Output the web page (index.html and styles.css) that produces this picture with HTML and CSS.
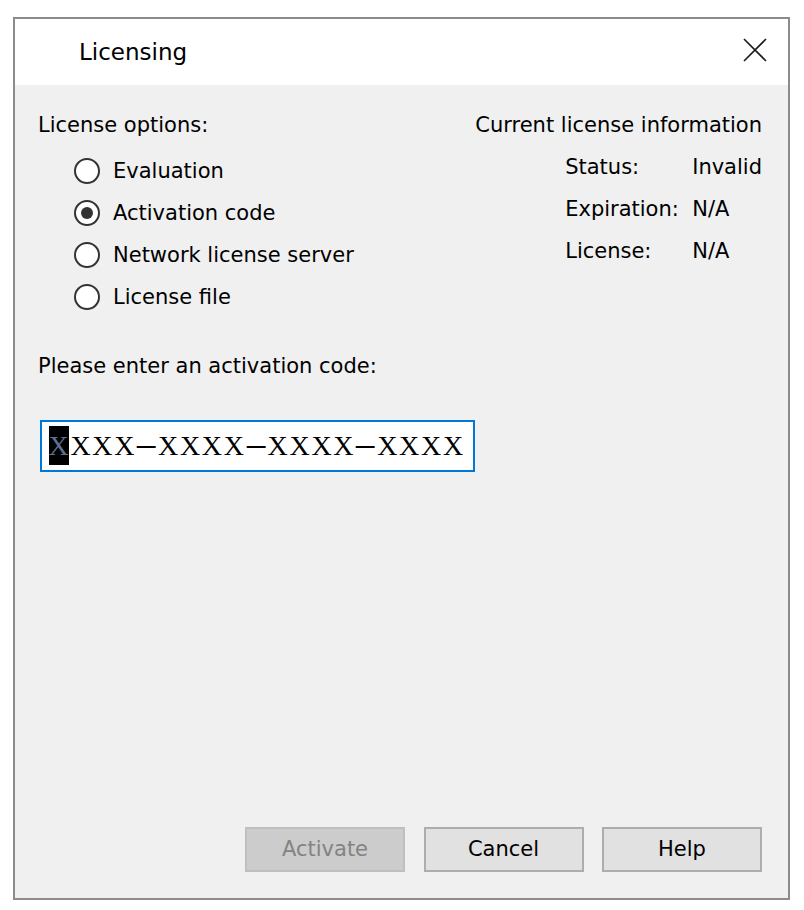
FILE: index.html
```html
<!DOCTYPE html>
<html lang="en">
<head>
<meta charset="utf-8">
<title>Licensing</title>
<link rel="stylesheet" href="styles.css">
</head>
<body>
<div class="page">
  <div class="window">
    <div class="titlebar">
      <span class="title">Licensing</span>
      <svg class="close" width="24" height="24" viewBox="0 0 24 24" aria-label="Close">
        <path d="M1 1L23 23M23 1L1 23" stroke="#1a1a1a" stroke-width="1.6" fill="none"/>
      </svg>
    </div>
    <div class="content">
      <div class="top">
        <div class="options">
          <div class="heading">License options:</div>
          <div class="radios">
            <div class="radio-row"><span class="radio"></span><span>Evaluation</span></div>
            <div class="radio-row"><span class="radio checked"></span><span>Activation code</span></div>
            <div class="radio-row"><span class="radio"></span><span>Network license server</span></div>
            <div class="radio-row"><span class="radio"></span><span>License file</span></div>
          </div>
        </div>
        <div class="info">
          <div class="heading">Current license information</div>
          <div class="info-grid">
            <span>Status:</span><span>Invalid</span>
            <span>Expiration:</span><span>N/A</span>
            <span>License:</span><span>N/A</span>
          </div>
        </div>
      </div>
      <div class="prompt">Please enter an activation code:</div>
      <div class="code-box">
        <span class="code"><span class="sel">X</span>XXX<span class="dash">-</span>XXXX<span class="dash">-</span>XXXX<span class="dash">-</span>XXXX</span>
      </div>
      <div class="buttons">
        <button class="btn" disabled>Activate</button>
        <button class="btn">Cancel</button>
        <button class="btn">Help</button>
      </div>
    </div>
  </div>
</div>
</body>
</html>
```

FILE: styles.css
```css
* {
  box-sizing: border-box;
}

body {
  margin: 0;
  background: #ffffff;
  font-family: "DejaVu Sans", Verdana, sans-serif;
  color: #000000;
}

.page {
  padding: 17px 14px 10px 13px;
}

.window {
  width: 777px;
  height: 883px;
  border: 2px solid #8c8c8c;
  background: #f0f0f0;
  display: flex;
  flex-direction: column;
}

.titlebar {
  flex: none;
  height: 66px;
  background: #ffffff;
  display: flex;
  align-items: center;
  justify-content: space-between;
  padding: 0 21px 0 64px;
}

.title {
  font-size: 23px;
}

.close {
  display: block;
  margin-bottom: 4px;
}

.content {
  flex: 1;
  display: flex;
  flex-direction: column;
  padding: 18.5px 26px 26px 23px;
  font-size: 21px;
  line-height: 42px;
}

.top {
  display: flex;
  justify-content: space-between;
}

.radios {
  margin-top: 4px;
  padding-left: 36px;
}

.radio-row {
  display: flex;
  align-items: center;
  height: 42px;
  gap: 13px;
}

.radio {
  flex: none;
  width: 26px;
  height: 26px;
  border: 2px solid #333333;
  border-radius: 50%;
  background: #ffffff;
  display: flex;
  align-items: center;
  justify-content: center;
}

.radio.checked::after {
  content: "";
  width: 12px;
  height: 12px;
  border-radius: 50%;
  background: #333333;
}

.info {
  display: flex;
  flex-direction: column;
  align-items: flex-end;
}

.info-grid {
  display: grid;
  grid-template-columns: 127px auto;
}

.prompt {
  margin-top: 27px;
}

.code-box {
  margin-top: 33px;
  margin-left: 1.5px;
  width: 435.5px;
  height: 52px;
  border: 2px solid #0078d7;
  background: #ffffff;
  display: flex;
  align-items: center;
  padding-left: 7px;
}

.code {
  font-family: "Liberation Serif", "Times New Roman", serif;
  font-size: 28px;
  letter-spacing: 1.7px;
  line-height: 39px;
  white-space: nowrap;
  color: #000000;
}

.sel {
  display: inline-block;
  width: 20px;
  height: 39px;
  background: #000000;
  color: #5d7090;
  letter-spacing: 0;
  margin-right: 1.9px;
}

.dash {
  display: inline-block;
  width: 20.2px;
  margin-right: 1.7px;
  text-align: center;
  letter-spacing: 0;
  transform: translateY(-2px) scaleX(2.6);
}

.buttons {
  margin-top: auto;
  display: flex;
  justify-content: flex-end;
  gap: 18.5px;
}

.btn {
  width: 160px;
  height: 45px;
  margin: 0;
  padding: 0;
  border: 2px solid #adadad;
  background: #e1e1e1;
  font-family: "DejaVu Sans", Verdana, sans-serif;
  font-size: 21px;
  line-height: 41px;
  color: #000000;
}

.btn:disabled {
  background: #cccccc;
  border-color: #bfbfbf;
  color: #838383;
}
```
